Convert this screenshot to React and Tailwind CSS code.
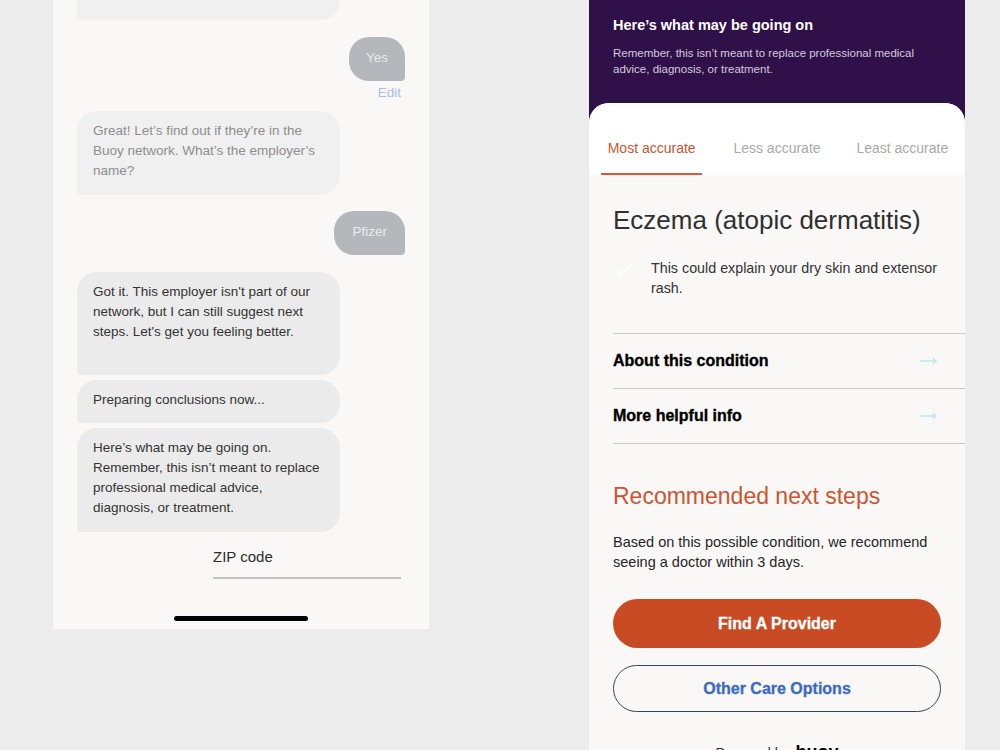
import React from "react";

const sans = { fontFamily: '"Liberation Sans", Arial, sans-serif' };

function LeftBubble({ children, className = "" }) {
  return (
    <div
      className={`w-[263px] shrink-0 self-start rounded-[20px] rounded-bl-[4px] px-4 text-[13.5px] leading-[20px] ${className}`}
    >
      {children}
    </div>
  );
}

function RightBubble({ children, className = "" }) {
  return (
    <div
      className={`shrink-0 self-end rounded-[20px] rounded-br-[4px] bg-[#b4b7bb] pt-[11px] pb-[13px] text-[13.5px] leading-[20px] text-[#e9eaeb] ${className}`}
    >
      {children}
    </div>
  );
}

function ArrowRight() {
  return (
    <svg width="17" height="8" viewBox="0 0 17 8" fill="none" stroke="#bfe2ee" strokeWidth="1.3" strokeLinecap="round">
      <path d="M0.7 4H16" />
      <path d="M13.2 1.6L16 4L13.2 6.4" />
    </svg>
  );
}

function CheckMark() {
  return (
    <svg width="20" height="16" viewBox="0 0 20 16" fill="none" stroke="#ffffff" strokeWidth="1.6" strokeLinecap="round" strokeLinejoin="round">
      <path d="M1.5 8.5L7 14L18.5 1.5" />
    </svg>
  );
}

function ChatPanel() {
  return (
    <div className="flex h-[629px] w-[376px] shrink-0 flex-col overflow-hidden bg-[#f9f8f6] px-6">
      <LeftBubble className="-mt-[40px] h-[60px] bg-[#f0f0f0]" />

      <RightBubble className="mt-[17px] px-[17px]">Yes</RightBubble>
      <div className="mt-[4px] shrink-0 self-end pr-[4px] text-[13.5px] leading-[16px] text-[#a9bee4]">Edit</div>

      <LeftBubble className="mt-[10px] bg-[#f0f0f0] pt-[10px] pb-[14px] text-[#8e8e8e]">
        Great! Let’s find out if they’re in the Buoy network. What’s the employer’s name?
      </LeftBubble>

      <RightBubble className="mt-[16px] px-[18px]">Pfizer</RightBubble>

      <LeftBubble className="mt-[17px] bg-[#ebebeb] pt-[10px] pb-[33px] text-[#333333]">
        Got it. This employer isn't part of our network, but I can still suggest next steps. Let's get you feeling better.
      </LeftBubble>

      <LeftBubble className="mt-[5px] bg-[#ebebeb] pt-[10px] pb-[13px] text-[#333333]">
        Preparing conclusions now...
      </LeftBubble>

      <LeftBubble className="mt-[5px] bg-[#ebebeb] pt-[10px] pb-[14px] text-[#333333]">
        Here’s what may be going on. Remember, this isn’t meant to replace professional medical advice, diagnosis, or treatment.
      </LeftBubble>

      <div className="mt-[15px] mr-[4px] w-[188px] shrink-0 self-end border-b-2 border-[#c2c1bf] pb-[10px] text-[15px] leading-[20px] text-[#2b2b2b]">
        ZIP code
      </div>

      <div className="mx-auto mt-[37px] h-[5px] w-[134px] shrink-0 rounded-full bg-black" />
    </div>
  );
}

function InfoRow({ label }) {
  return (
    <div className="ml-6 flex h-[55px] items-center justify-between border-b border-[#cacaca] pr-[28px]">
      <span className="text-[16px] font-bold text-black [-webkit-text-stroke:0.35px_#000]">{label}</span>
      <ArrowRight />
    </div>
  );
}

function ResultsPanel() {
  const tabs = [
    { label: "Most accurate", active: true },
    { label: "Less accurate", active: false },
    { label: "Least accurate", active: false },
  ];
  return (
    <div className="flex h-[750px] w-[376px] shrink-0 flex-col overflow-hidden bg-[#2f1049]">
      <div className="h-[103px] shrink-0 px-6 pt-[15px]">
        <div className="text-[14.5px] font-bold leading-[20px] text-white">Here’s what may be going on</div>
        <div className="mt-[10px] max-w-[310px] text-[11.5px] leading-[16px] text-[#d3cbdb]">
          Remember, this isn’t meant to replace professional medical advice, diagnosis, or treatment.
        </div>
      </div>

      <div className="flex-1 overflow-hidden rounded-t-[20px] bg-[#f9f8f6]">
        <div className="grid grid-cols-3 bg-white">
          {tabs.map((t) => (
            <div key={t.label} className="flex flex-col items-center pt-[36px]">
              <span className={`text-[14px] leading-[18px] ${t.active ? "text-[#cc5432]" : "text-[#a9a9a9]"}`}>{t.label}</span>
              <div className={`mt-[16px] h-[2px] w-[101px] ${t.active ? "bg-[#d45a36]" : "bg-transparent"}`} />
            </div>
          ))}
        </div>

        <div className="px-6 pt-[29px]">
          <h1 className="text-[26px] leading-[32px] text-[#303030]">Eczema (atopic dermatitis)</h1>
          <div className="mt-[22px] flex items-start gap-[17px]">
            <div className="mt-[3px] pl-[1px]">
              <CheckMark />
            </div>
            <p className="text-[14.3px] leading-[20px] text-[#333333]">
              This could explain your dry skin and extensor rash.
            </p>
          </div>
        </div>

        <div className="ml-6 mt-[35px] border-t border-[#cacaca]" />
        <InfoRow label="About this condition" />
        <InfoRow label="More helpful info" />

        <div className="px-6">
          <h2 className="mt-[38px] text-[23px] leading-[28px] text-[#cc5432]">Recommended next steps</h2>
          <p className="mt-[22px] text-[14.5px] leading-[20px] text-[#262626]">
            Based on this possible condition, we recommend seeing a doctor within 3 days.
          </p>
          <button className="mt-[27px] flex h-[49px] w-full items-center justify-center rounded-full bg-[#c84b24] text-[16px] font-bold text-white [-webkit-text-stroke:0.3px_#fff]">
            Find A Provider
          </button>
          <button className="mt-[17px] flex h-[47px] w-full items-center justify-center rounded-full border border-[#3d4160] text-[16px] font-bold text-[#3a6bc2] [-webkit-text-stroke:0.3px_#3a6bc2]">
            Other Care Options
          </button>
          <div className="mt-[30px] flex items-end justify-center gap-[6px] text-[14px] leading-[18px] text-[#333333]">
            <span>Powered by</span>
            <span className="text-[18px] font-bold leading-[20px] text-black">buoy</span>
          </div>
        </div>
      </div>
    </div>
  );
}

export default function App() {
  return (
    <div className="flex h-[750px] w-[1000px] items-start gap-[160px] overflow-hidden bg-[#ececec] pl-[53px]" style={sans}>
      <ChatPanel />
      <ResultsPanel />
    </div>
  );
}
